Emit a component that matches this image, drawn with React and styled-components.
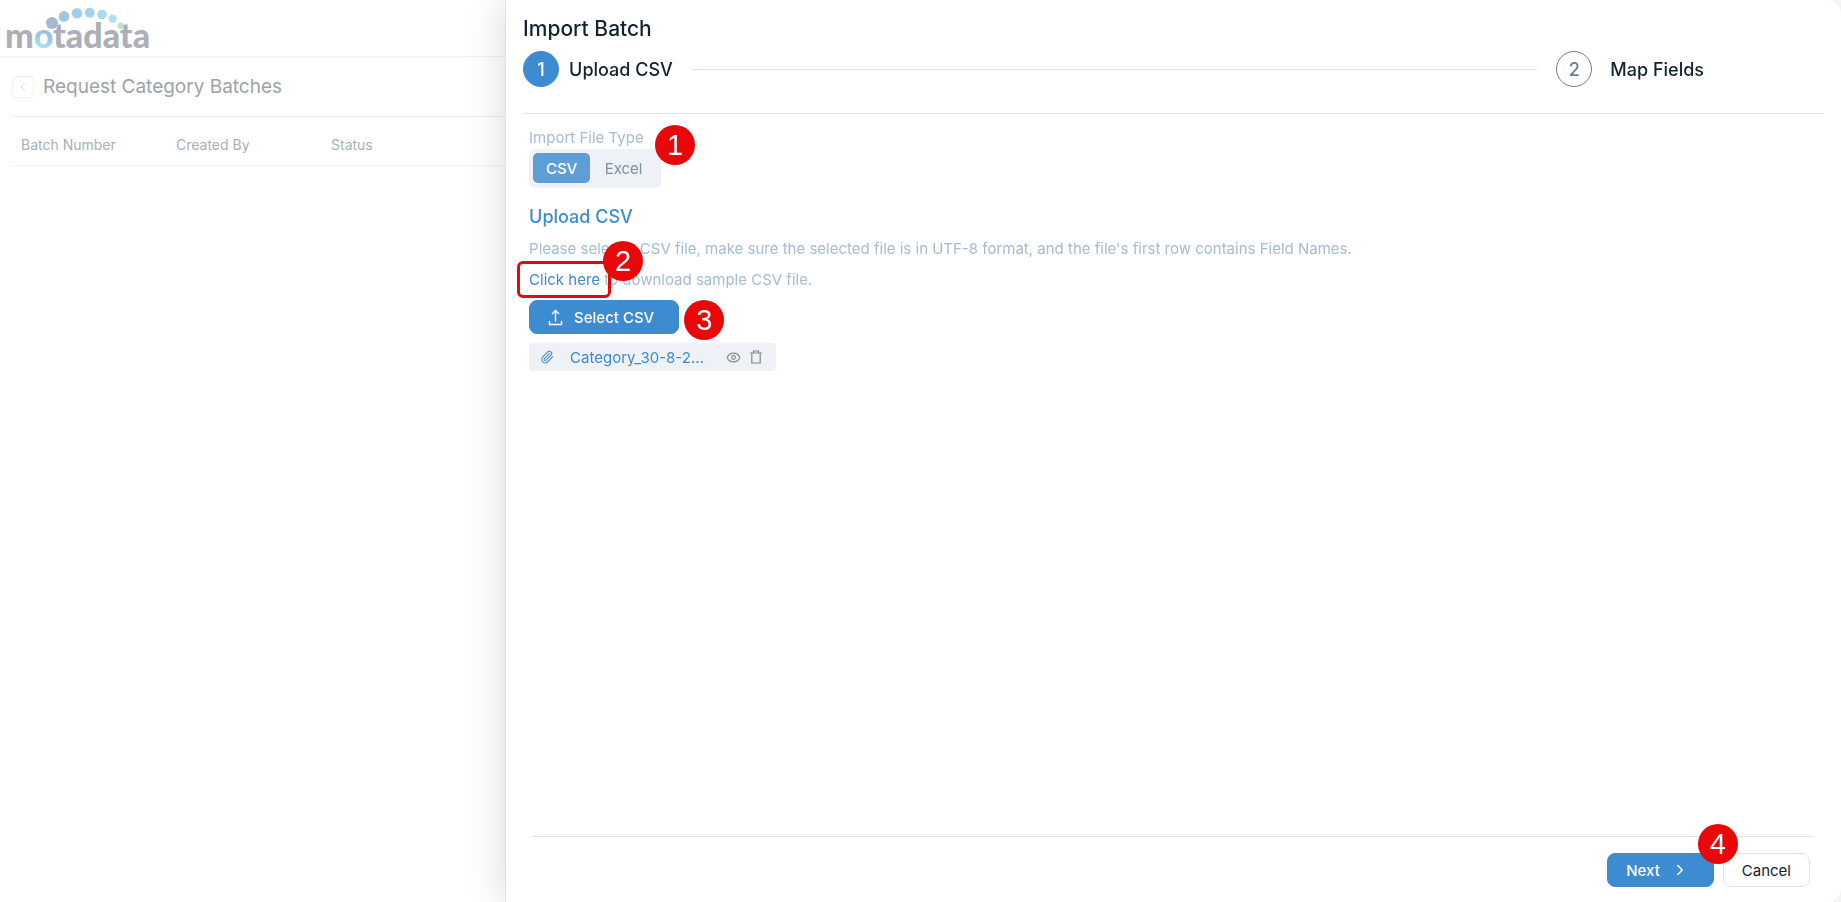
import React, { useState } from 'react';
import styled, { createGlobalStyle, css } from 'styled-components';
import { Paperclip, Eye, ChevronLeft, ChevronRight } from 'lucide-react';

const colors = {
  primary: '#3d8bd0',
  primarySoft: '#5f9dd6',
  text: '#14212e',
  muted: '#a5bcd2',
  neutral: '#7b8fa5',
  border: '#dde4ed',
  surface: '#eef1f6',
  marker: '#e90709'
};

const GlobalStyle = createGlobalStyle`
  * {
    box-sizing: border-box;
  }

  body {
    margin: 0;
    background: #fff;
    font-family: Inter, 'Liberation Sans', sans-serif;
    font-size: 15px;
    color: ${colors.text};
  }

  button, input {
    font: inherit;
  }
`;

// Page behind the drawer
const Page = styled.div`
  min-height: 100vh;
  overflow: hidden;
`;

const TopBar = styled.header`
  display: flex;
  height: 57px;
  padding: 4px 6px;
  border-bottom: 1px solid #eff2f5;
`;

const BatchSection = styled.main`
  padding: 0 12px;
`;

const TitleRow = styled.div`
  display: flex;
  align-items: center;
  gap: 9px;
  height: 60px;
  border-bottom: 1px solid #eaeef2;
`;

const BackButton = styled.button`
  display: flex;
  align-items: center;
  justify-content: center;
  width: 22px;
  height: 22px;
  padding: 0;
  border: 1px solid #eff2f5;
  border-radius: 4px;
  background: none;
  color: #d3dce6;
`;

const PageTitle = styled.h1`
  margin: 0;
  font-size: 19px;
  font-weight: 400;
  color: #9ca3aa;
`;

const BatchTable = styled.table`
  width: 100%;
  table-layout: fixed;
  border-collapse: collapse;

  th {
    width: 155px;
    height: 48px;
    padding: 9px 9px 0;
    border-bottom: 1px solid #f0f2f4;
    font-size: 14px;
    font-weight: 400;
    line-height: 20px;
    text-align: left;
    color: #a9b0b8;
  }

  th:last-child {
    width: auto;
  }
`;

// Drawer
const Backdrop = styled.div`
  position: fixed;
  inset: 0 0 0 auto;
  width: 73%;
  display: flex;
  justify-content: flex-end;
`;

const Drawer = styled.section`
  display: flex;
  flex-direction: column;
  width: calc(100% - 8px);
  border-left: 1px solid ${colors.border};
  border-radius: 0 14px 14px 0;
  background: #fff;
  box-shadow: 0 0 40px rgba(0, 0, 0, 0.16);
`;

const DrawerHeader = styled.header`
  margin: 0 17px;
  padding-top: 17px;
  border-bottom: 1px solid ${colors.border};
`;

const DrawerTitle = styled.h2`
  margin: 0;
  font-size: 21px;
  font-weight: 500;
  line-height: 24px;
`;

const Steps = styled.ol`
  display: flex;
  align-items: center;
  gap: 19px;
  margin: 0;
  padding: 10px 120px 26px 0;
  list-style: none;
`;

const Step = styled.li`
  display: flex;
  align-items: center;
  gap: ${props => (props.$active ? '10px' : '18px')};
  font-size: 18px;
  font-weight: 500;
`;

const StepNumber = styled.span`
  display: flex;
  align-items: center;
  justify-content: center;
  width: 36px;
  height: 36px;
  border: 1px solid ${props => (props.$active ? colors.primary : '#6f7c8b')};
  border-radius: 50%;
  background: ${props => (props.$active ? colors.primary : '#fff')};
  color: ${props => (props.$active ? '#fff' : '#6f7c8b')};
`;

const StepLine = styled.li`
  flex: 1;
  height: 1px;
  background: ${colors.border};
`;

const DrawerBody = styled.div`
  flex: 1;
  display: flex;
  flex-direction: column;
  align-items: flex-start;
  padding: 13px 23px 0;
`;

const FileType = styled.fieldset`
  margin: 0;
  padding: 0;
  border: 0;
`;

const FileTypeLegend = styled.legend`
  padding: 0;
  line-height: 22px;
  color: ${colors.muted};
`;

const Segments = styled.div`
  position: relative;
  display: flex;
  width: 132px;
  height: 39px;
  padding: 4px 4px 5px;
  border-radius: 6px;
  background: ${colors.surface};
`;

const Segment = styled.label`
  position: relative;
  display: flex;
  align-items: center;
  justify-content: center;
  flex: ${props => (props.$wide ? 1 : '0 0 57px')};
  border-radius: 5px;
  color: ${colors.neutral};

  ${props => props.$checked && css`
    background: ${colors.primarySoft};
    color: #fff;
    font-weight: 500;
  `}

  input {
    position: absolute;
    inset: 0;
    margin: 0;
    opacity: 0;
  }
`;

const SectionTitle = styled.h3`
  margin: 17px 0 4px;
  font-size: 18px;
  font-weight: 500;
  line-height: 24px;
  color: ${colors.primary};
`;

const Hint = styled.p`
  margin: 0;
  line-height: 31px;
  color: ${colors.muted};
`;

const SampleLink = styled.a`
  color: ${colors.primary};
  text-decoration: none;
`;

const Highlighted = styled.span`
  position: relative;

  &::before {
    content: '';
    position: absolute;
    inset: -9px -11px -9px -12px;
    border: 3px solid ${colors.marker};
    border-radius: 6px;
    pointer-events: none;
  }
`;

const Anchor = styled.div`
  position: relative;
  display: flex;
`;

const UploadArea = styled(Anchor)`
  margin-top: 5px;
`;

// Numbered marker that sits over the control it explains
const Marker = styled.span`
  position: absolute;
  top: ${props => props.$top}px;
  right: ${props => props.$right}px;
  z-index: 1;
  display: flex;
  align-items: center;
  justify-content: center;
  width: 40px;
  height: 40px;
  border-radius: 50%;
  background: ${colors.marker};
  color: #fff;
  font-family: 'Liberation Sans', Arial, sans-serif;
  font-size: 29px;
  font-weight: 400;
  line-height: 40px;
`;

const Button = styled.button`
  display: inline-flex;
  align-items: center;
  gap: 11px;
  height: 34px;
  padding: 0 18px;
  border: 1px solid ${colors.border};
  border-radius: 8px;
  background: #fff;
  color: ${colors.text};

  ${props => props.$primary && css`
    padding-right: 24px;
    border-color: ${colors.primary};
    background: ${colors.primary};
    color: #fff;
    font-weight: 500;
  `}
`;

const FileChip = styled.div`
  display: flex;
  align-items: center;
  width: 247px;
  height: 28px;
  margin-top: 9px;
  padding: 0 14px 0 11px;
  border-radius: 4px;
  background: ${colors.surface};
  color: ${colors.primary};
`;

const FileName = styled.span`
  flex: 1;
  margin: 0 19px 0 16px;
  overflow: hidden;
  text-overflow: ellipsis;
  white-space: nowrap;
`;

const IconButton = styled.button`
  display: flex;
  margin-left: ${props => props.$gap || 0}px;
  padding: 0;
  border: 0;
  background: none;
  color: #84898f;
`;

const DrawerFooter = styled.footer`
  display: flex;
  justify-content: flex-end;
  gap: 9px;
  margin: 0 27px;
  padding: 16px 4px 15px;
  border-top: 1px solid ${colors.border};
`;

const logoDots = [
  { x: 52, y: 23, r: 6, fill: '#a5b8cd' },
  { x: 64, y: 16.5, r: 5.4, fill: '#a3c5df' },
  { x: 77, y: 13.3, r: 5.3, fill: '#a3cfea' },
  { x: 89.7, y: 12.8, r: 5, fill: '#a5d3ed' },
  { x: 102, y: 14.5, r: 4.8, fill: '#a6dbef' },
  { x: 112.7, y: 18.7, r: 4.2, fill: '#ace4e8' },
  { x: 120.7, y: 25.7, r: 3.3, fill: '#b7e6c4' }
];

const Logo = () => (
  <svg width="160" height="52" viewBox="6 4 160 52" overflow="visible" role="img" aria-label="motadata">
    <defs>
      <linearGradient id="ring" x1="50" y1="29" x2="42" y2="49" gradientUnits="userSpaceOnUse">
        <stop offset="0" stopColor="#9ab9d3" />
        <stop offset="0.5" stopColor="#9dc8e4" />
        <stop offset="0.85" stopColor="#a3e1ee" />
        <stop offset="1" stopColor="#b7e6c4" />
      </linearGradient>
    </defs>
    {logoDots.map(dot => (
      <circle key={dot.x} cx={dot.x} cy={dot.y} r={dot.r} fill={dot.fill} />
    ))}
    <text x="5" y="48" fontFamily="Lato, sans-serif" fontSize="34" fontWeight="900" fill="#acafb5">
      m<tspan fill="url(#ring)">o</tspan>tadata
    </text>
  </svg>
);

const UploadIcon = () => (
  <svg width="15" height="17" viewBox="0 0 15 17" fill="none" stroke="currentColor" strokeWidth="1.4">
    <path d="M7.5 12.5V1.5M4 5l3.5-3.5L11 5M1.5 12v3.5h12V12" />
  </svg>
);

const TrashIcon = () => (
  <svg width="12" height="14" viewBox="0 0 12 14" fill="none" stroke="currentColor" strokeWidth="1.2">
    <path d="M0 3h12M3.5 3V1h5v2M1.8 3v10h8.4V3" />
  </svg>
);

const fileTypes = ['CSV', 'Excel'];

const App = () => {
  const [fileType, setFileType] = useState('CSV');

  return (
    <>
      <GlobalStyle />
      <Page>
        <TopBar>
          <Logo />
        </TopBar>
        <BatchSection>
          <TitleRow>
            <BackButton type="button" aria-label="Back">
              <ChevronLeft size={16} strokeWidth={1.5} />
            </BackButton>
            <PageTitle>Request Category Batches</PageTitle>
          </TitleRow>
          <BatchTable>
            <thead>
              <tr>
                <th>Batch Number</th>
                <th>Created By</th>
                <th>Status</th>
                <th aria-hidden="true" />
              </tr>
            </thead>
          </BatchTable>
        </BatchSection>
      </Page>

      <Backdrop>
        <Drawer role="dialog" aria-labelledby="drawer-title">
          <DrawerHeader>
            <DrawerTitle id="drawer-title">Import Batch</DrawerTitle>
            <Steps>
              <Step $active>
                <StepNumber $active>1</StepNumber>
                Upload CSV
              </Step>
              <StepLine aria-hidden="true" />
              <Step>
                <StepNumber>2</StepNumber>
                Map Fields
              </Step>
            </Steps>
          </DrawerHeader>

          <DrawerBody>
            <FileType>
              <FileTypeLegend>Import File Type</FileTypeLegend>
              <Segments>
                {fileTypes.map(type => (
                  <Segment key={type} $checked={fileType === type} $wide={type === 'Excel'}>
                    <input
                      type="radio"
                      name="fileType"
                      value={type}
                      checked={fileType === type}
                      onChange={() => setFileType(type)}
                    />
                    {type}
                  </Segment>
                ))}
                <Marker $top={-24} $right={-34}>1</Marker>
              </Segments>
            </FileType>

            <SectionTitle>Upload CSV</SectionTitle>
            <Hint>
              Please select a CSV file, make sure the selected file is in UTF-8 format, and the file's first row contains Field Names.
            </Hint>
            <Hint>
              <Highlighted>
                <SampleLink href="#sample">Click here</SampleLink>
                <Marker $top={-29} $right={-43}>2</Marker>
              </Highlighted>
              {' '}to download sample CSV file.
            </Hint>

            <UploadArea>
              <Button type="button" $primary>
                <UploadIcon />
                Select CSV
              </Button>
              <Marker $top={0} $right={-45}>3</Marker>
            </UploadArea>

            <FileChip>
              <Paperclip size={14} strokeWidth={1.8} />
              <FileName>Category_30-8-2023.csv</FileName>
              <IconButton type="button" aria-label="Preview file">
                <Eye size={15} strokeWidth={1.8} />
              </IconButton>
              <IconButton type="button" aria-label="Delete file" $gap={9}>
                <TrashIcon />
              </IconButton>
            </FileChip>
          </DrawerBody>

          <DrawerFooter>
            <Anchor>
              <Button type="button" $primary>
                Next
                <ChevronRight size={18} strokeWidth={2} />
              </Button>
              <Marker $top={-29} $right={-24}>4</Marker>
            </Anchor>
            <Button type="button">Cancel</Button>
          </DrawerFooter>
        </Drawer>
      </Backdrop>
    </>
  );
};

export default App;
